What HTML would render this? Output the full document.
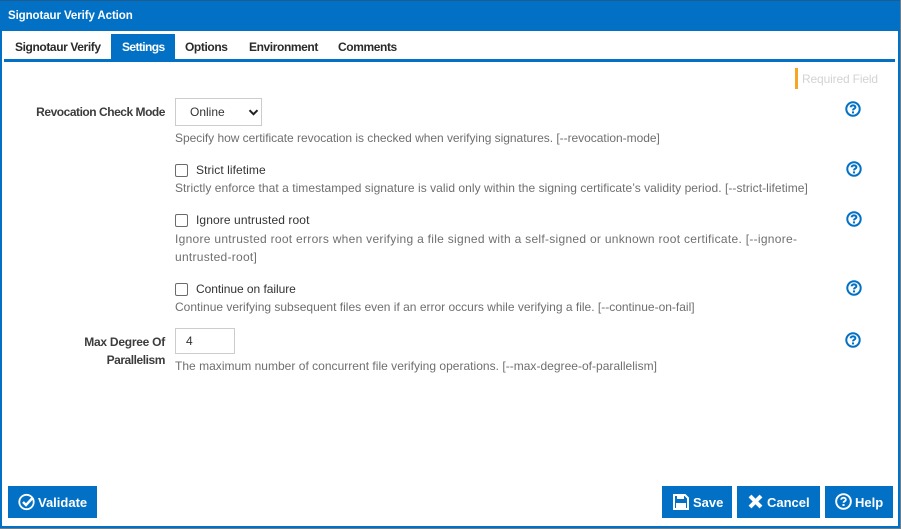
<!DOCTYPE html>
<html><head><meta charset="utf-8"><style>
html,body{margin:0;padding:0;background:#fff}
#p{position:relative;width:901px;height:529px;overflow:hidden;background:#fff;font-family:"Liberation Sans",sans-serif;font-size:12px;color:#333}
#p div,#p span.a{position:absolute;white-space:nowrap}
.b{background:#0271c5}
.tab{font-weight:bold;font-size:12px;color:#2b2b2b;top:40px;line-height:14px;letter-spacing:-.4px}
.d{left:175px;color:#6f6f6f;font-size:12px;line-height:16px}
.l{color:#333;font-size:12px;line-height:16px;left:196px}
.lab{font-weight:bold;color:#3c3c3c;font-size:12px;line-height:18px;right:736px;text-align:right}
.cb{left:175px;width:11px;height:11px;border:1px solid #6b6b6b;border-radius:2px;background:#fff}
.btn{top:486px;height:32px;background:#0271c5;color:#fff;font-weight:bold;font-size:13px;line-height:33px}
svg{position:absolute;overflow:visible}
</style></head><body><div id="p">
<div style="left:0;top:0;width:901px;height:1px;background:#1f5c8e"></div>
<div class="b" style="left:0;top:1px;width:900px;height:30px"></div>
<div class="b" style="left:0;top:31px;width:2px;height:497px"></div>
<div class="b" style="left:898px;top:31px;width:2px;height:497px"></div>
<div class="b" style="left:0;top:526px;width:900px;height:2px"></div>
<div style="left:900px;top:0;width:1px;height:529px;background:#6e7f8c"></div>
<div style="left:0;top:528px;width:901px;height:1px;background:#6e7f8c"></div>
<div style="left:8px;top:9px;color:#fff;font-weight:bold;font-size:11.5px;line-height:15px;letter-spacing:-.09px">Signotaur Verify Action</div>

<div class="b" style="left:111px;top:34px;width:64px;height:25px"></div>
<div class="b" style="left:4px;top:59px;width:891px;height:3px"></div>
<div class="tab" style="left:15px">Signotaur Verify</div>
<div class="tab" style="left:122px;color:#fff;letter-spacing:-.6px">Settings</div>
<div class="tab" style="left:185px">Options</div>
<div class="tab" style="left:249px">Environment</div>
<div class="tab" style="left:338px">Comments</div>

<div style="left:795px;top:68px;width:3px;height:21px;background:#f5a623"></div>
<div style="left:802px;top:72px;color:#d3d3d3;font-size:12px;line-height:15px;letter-spacing:-.15px">Required Field</div>

<div class="lab" style="top:103px;letter-spacing:-.47px">Revocation Check Mode</div>
<div style="left:175px;top:98px;width:85px;height:26px;border:1px solid #ccc;background:#fff"></div>
<div style="left:190px;top:104px;line-height:16px;color:#333">Online</div>
<svg style="left:248px;top:109px" width="11" height="7" viewBox="0 0 11 7"><path d="M1.5 1.2L5.5 5.2L9.5 1.2" fill="none" stroke="#222" stroke-width="2"/></svg>
<div class="d" style="top:130px;letter-spacing:-.03px">Specify how certificate revocation is checked when verifying signatures. [--revocation-mode]</div>

<div class="cb" style="top:164px"></div>
<div class="l" style="top:162px;letter-spacing:.07px">Strict lifetime</div>
<div class="d" style="top:180px;letter-spacing:.048px">Strictly enforce that a timestamped signature is valid only within the signing certificate’s validity period. [--strict-lifetime]</div>

<div class="cb" style="top:214px"></div>
<div class="l" style="top:212px;letter-spacing:.1px">Ignore untrusted root</div>
<div class="d" style="top:231px;letter-spacing:.287px">Ignore untrusted root errors when verifying a file signed with a self-signed or unknown root certificate. [--ignore-</div>
<div class="d" style="top:249px;letter-spacing:.27px">untrusted-root]</div>

<div class="cb" style="top:283px"></div>
<div class="l" style="top:281px;letter-spacing:-.05px">Continue on failure</div>
<div class="d" style="top:299px">Continue verifying subsequent files even if an error occurs while verifying a file. [--continue-on-fail]</div>

<div class="lab" style="top:333px;letter-spacing:-.25px">Max Degree Of</div>
<div class="lab" style="top:351px;letter-spacing:-.45px">Parallelism</div>
<div style="left:175px;top:328px;width:58px;height:24px;border:1px solid #ccc;background:#fff"></div>
<div style="left:186px;top:333px;line-height:16px;color:#333">4</div>
<div class="d" style="top:358px;letter-spacing:.02px">The maximum number of concurrent file verifying operations. [--max-degree-of-parallelism]</div>

<svg style="left:845px;top:101px" width="16" height="16" viewBox="0 0 16 16"><circle cx="8" cy="8" r="6.7" fill="none" stroke="#0271c5" stroke-width="2"/><path d="M5.6 6.3C5.7 3.7 10.4 3.7 10.4 6.3C10.4 7.8 8 7.6 8 9.4" fill="none" stroke="#0271c5" stroke-width="2"/><rect x="7" y="10.4" width="2" height="2" fill="#0271c5"/></svg>
<svg style="left:846px;top:161px" width="16" height="16" viewBox="0 0 16 16"><circle cx="8" cy="8" r="6.7" fill="none" stroke="#0271c5" stroke-width="2"/><path d="M5.6 6.3C5.7 3.7 10.4 3.7 10.4 6.3C10.4 7.8 8 7.6 8 9.4" fill="none" stroke="#0271c5" stroke-width="2"/><rect x="7" y="10.4" width="2" height="2" fill="#0271c5"/></svg>
<svg style="left:846px;top:211px" width="16" height="16" viewBox="0 0 16 16"><circle cx="8" cy="8" r="6.7" fill="none" stroke="#0271c5" stroke-width="2"/><path d="M5.6 6.3C5.7 3.7 10.4 3.7 10.4 6.3C10.4 7.8 8 7.6 8 9.4" fill="none" stroke="#0271c5" stroke-width="2"/><rect x="7" y="10.4" width="2" height="2" fill="#0271c5"/></svg>
<svg style="left:846px;top:280px" width="16" height="16" viewBox="0 0 16 16"><circle cx="8" cy="8" r="6.7" fill="none" stroke="#0271c5" stroke-width="2"/><path d="M5.6 6.3C5.7 3.7 10.4 3.7 10.4 6.3C10.4 7.8 8 7.6 8 9.4" fill="none" stroke="#0271c5" stroke-width="2"/><rect x="7" y="10.4" width="2" height="2" fill="#0271c5"/></svg>
<svg style="left:845px;top:332px" width="16" height="16" viewBox="0 0 16 16"><circle cx="8" cy="8" r="6.7" fill="none" stroke="#0271c5" stroke-width="2"/><path d="M5.6 6.3C5.7 3.7 10.4 3.7 10.4 6.3C10.4 7.8 8 7.6 8 9.4" fill="none" stroke="#0271c5" stroke-width="2"/><rect x="7" y="10.4" width="2" height="2" fill="#0271c5"/></svg>

<div class="btn" style="left:8px;width:89px"><span class="a" style="left:30px">Validate</span>
<svg style="left:10px;top:7px" width="18" height="18" viewBox="0 0 18 18"><circle cx="8.5" cy="9" r="7.2" fill="none" stroke="#fff" stroke-width="1.8"/><path d="M5 9L8 12L15 4.5" fill="none" stroke="#fff" stroke-width="2.4"/></svg></div>
<div class="btn" style="left:662px;width:70px"><span class="a" style="left:31px">Save</span>
<svg style="left:11px;top:8px" width="16" height="16" viewBox="0 0 16 16"><path d="M1 1H12L15 4V15H1Z" fill="none" stroke="#fff" stroke-width="2"/><rect x="4" y="1" width="7" height="4" fill="#fff"/><rect x="3" y="9" width="10" height="6" fill="#fff"/></svg></div>
<div class="btn" style="left:737px;width:83px"><span class="a" style="left:30px">Cancel</span>
<svg style="left:11px;top:8px" width="15" height="15" viewBox="0 0 15 15"><path d="M2 2L13 13M13 2L2 13" stroke="#fff" stroke-width="4"/></svg></div>
<div class="btn" style="left:825px;width:68px"><span class="a" style="left:30px">Help</span>
<svg style="left:10px;top:7px" width="17" height="17" viewBox="0 0 16 16"><circle cx="8" cy="8" r="6.9" fill="none" stroke="#fff" stroke-width="1.8"/><path d="M5.8 6.3C5.9 3.9 10.2 3.9 10.2 6.3C10.2 7.8 8 7.6 8 9.2" fill="none" stroke="#fff" stroke-width="1.7"/><rect x="7" y="10.4" width="2" height="1.8" fill="#fff"/></svg></div>
</div></body></html>
